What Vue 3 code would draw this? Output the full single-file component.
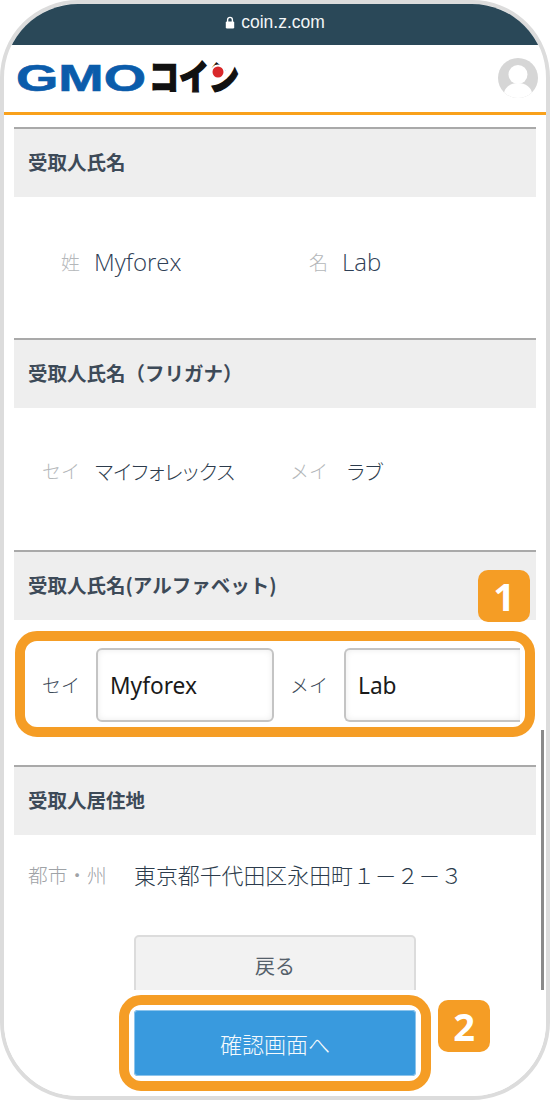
<script setup>
const nameRows = [
  { title: '受取人氏名', kind: 'plain', a: ['姓', 'Myforex'], b: ['名', 'Lab'] },
  { title: '受取人氏名（フリガナ）', kind: 'kana', a: ['セイ', 'マイフォレックス'], b: ['メイ', 'ラブ'] },
]
</script>

<template>
  <div class="phone">
    <div class="urlbar">
      <svg class="lock" width="10" height="13" viewBox="0 0 10 13">
        <path d="M2.6 6V3.8a2.4 2.4 0 0 1 4.8 0V6" fill="none" stroke="#fff" stroke-width="1.4" />
        <rect x="0.8" y="5.4" width="8.4" height="7" rx="1.2" fill="#fff" />
      </svg>
      <span>coin.z.com</span>
    </div>

    <header class="head">
      <svg class="logo" width="250" height="44" viewBox="0 0 250 44">
        <text class="logo-gmo" x="0" y="35" textLength="130" lengthAdjust="spacingAndGlyphs">GMO</text>
        <text class="logo-coin" transform="translate(133 34) scale(1 1.17)">コイン</text>
        <circle cx="202" cy="16" r="6.5" fill="#d9282a" stroke="#fff" stroke-width="2" />
      </svg>
      <svg class="avatar" width="40" height="40" viewBox="0 0 40 40">
        <defs>
          <clipPath id="avatar-clip"><circle cx="20" cy="20" r="20" /></clipPath>
        </defs>
        <circle cx="20" cy="20" r="20" fill="#d6d6d6" />
        <g clip-path="url(#avatar-clip)" fill="#fff">
          <circle cx="20" cy="16.5" r="9.5" />
          <ellipse cx="20" cy="36" rx="14" ry="11" />
        </g>
      </svg>
    </header>

    <main class="main">
      <section v-for="r in nameRows" :key="r.title" class="section">
        <h2 class="title">{{ r.title }}</h2>
        <div class="row" :class="r.kind">
          <div class="field">
            <span class="label">{{ r.a[0] }}</span><span class="value">{{ r.a[1] }}</span>
          </div>
          <div class="field">
            <span class="label">{{ r.b[0] }}</span><span class="value">{{ r.b[1] }}</span>
          </div>
        </div>
      </section>

      <section class="section">
        <h2 class="title">受取人氏名(アルファベット)</h2>
        <div class="row inputs">
          <div class="field">
            <span class="label">セイ</span><input class="box" value="Myforex" readonly />
          </div>
          <div class="field">
            <span class="label">メイ</span><input class="box" value="Lab" readonly />
          </div>
        </div>
      </section>

      <section class="section">
        <h2 class="title">受取人居住地</h2>
        <div class="address">
          <span class="addr-label">都市・州</span><span class="value">東京都千代田区永田町１－２－３</span>
        </div>
      </section>

      <button class="btn back" type="button">戻る</button>
      <div class="scrollbar"></div>
    </main>

    <footer class="foot">
      <button class="btn next" type="button">確認画面へ</button>
    </footer>

    <div class="mark mark-1"></div>
    <div class="badge badge-1">1</div>
    <div class="mark mark-2"></div>
    <div class="badge badge-2">2</div>
  </div>
</template>

<style scoped>
.phone {
  position: relative;
  box-sizing: border-box;
  width: 550px;
  height: 1100px;
  border: 4px solid #dcdcdc;
  border-radius: 78px;
  overflow: hidden;
  background: #fff;
  display: flex;
  flex-direction: column;
  font-family: "Noto Sans CJK JP", "Noto Sans", sans-serif;
  color: #3f4b57;
}
.urlbar {
  flex: none;
  height: 41px;
  background: #2a4858;
  color: #f2f5f6;
  display: flex;
  align-items: center;
  justify-content: center;
  gap: 6px;
  font: 17.5px "Liberation Sans", sans-serif;
  padding-bottom: 4px;
  box-sizing: border-box;
}
.lock { display: block; }
.head {
  flex: none;
  box-sizing: border-box;
  height: 70px;
  border-bottom: 3px solid #f9a11b;
  display: flex;
  align-items: center;
  justify-content: space-between;
  padding: 0 8px 2px 12px;
}
.logo-gmo {
  font: 700 36px "Liberation Sans", sans-serif;
  fill: #0b5cab;
  stroke: #0b5cab;
  stroke-width: 0.6px;
}
.logo-coin {
  font: 900 30px "Noto Sans CJK JP", sans-serif;
  fill: #111;
  stroke: #111;
  stroke-width: 1.2px;
}
.main {
  flex: 1;
  min-height: 0;
  overflow: hidden;
  position: relative;
  padding: 12px 10px 0;
}
.section { margin: 0; }
.title {
  box-sizing: border-box;
  height: 70px;
  margin: 0;
  padding: 0 14px 3px;
  display: flex;
  align-items: center;
  background: #eeeeee;
  border-top: 2px solid #a9a9a9;
  font-size: 19.5px;
  font-weight: 700;
  color: #3d4a58;
}
.row {
  display: flex;
  align-items: center;
  height: 141px;
  padding-bottom: 13px;
  box-sizing: border-box;
}
.row.kana { height: 141.5px; padding-bottom: 16px; }
.row.inputs { height: 145px; padding-bottom: 15px; }
.field {
  width: 248px;
  display: flex;
  align-items: center;
  gap: 15px;
}
.plain .field { gap: 14px; }
.inputs .field { gap: 16px; }
.inputs .field + .field .box {
  width: 176px;
  border-right: 0;
  border-radius: 6px 0 0 6px;
}
.label {
  width: 66px;
  text-align: right;
  font-size: 19px;
  font-weight: 300;
  color: #b4b7ba;
  flex: none;
}
.value {
  font: 300 24px "Open Sans", "Noto Sans CJK JP", sans-serif;
  color: #2f4056;
}
.kana .value {
  font: 300 20.5px "Noto Sans CJK JP", sans-serif;
  font-feature-settings: "palt";
  color: #2c3b4c;
}
.kana .field + .field .value { margin-left: 4px; }
.inputs .label { color: #3d4a58; }
.box {
  box-sizing: border-box;
  width: 178px;
  height: 74px;
  padding: 2px 12px 0;
  border: 2px solid #c4c4c4;
  border-radius: 6px;
  background: #fff;
  box-shadow: inset 0 0 6px rgba(0, 0, 0, 0.08);
  font: 22.7px "Noto Sans", sans-serif;
  color: #1a1a1a;
  outline: none;
}
.address {
  display: flex;
  align-items: center;
  padding: 22px 14px 0;
  height: 58px;
  box-sizing: border-box;
}
.addr-label { width: 106px; flex: none; font-size: 19.7px; font-weight: 300; color: #9fa3a7; }
.address .value {
  font: 300 21.9px "Noto Sans CJK JP", sans-serif;
  color: #2c3b4c;
}
.btn {
  display: block;
  box-sizing: border-box;
  width: 282px;
  margin: 0 auto;
  font-family: inherit;
  font-size: 20px;
}
.back {
  height: 80px;
  margin-top: 42.5px;
  padding-bottom: 20px;
  background: #f2f2f2;
  border: 2px solid #dcdcdc;
  border-radius: 5px;
  color: #55606a;
}
.scrollbar {
  position: absolute;
  right: 2px;
  top: 615px;
  bottom: 0;
  width: 3px;
  background: #8a8a8a;
}
.foot {
  flex: none;
  height: 106px;
  padding-top: 20px;
  box-sizing: border-box;
  background: #fff;
}
.next {
  height: 66px;
  margin-left: 130px;
  margin-right: 0;
  background: #399ade;
  border: 0;
  border-radius: 4px;
  color: #f6fafd;
  font-size: 22px;
  font-weight: 300;
  box-shadow: 0 0 0 1px #8cc4ec inset;
}
.mark {
  position: absolute;
  box-sizing: border-box;
  border: 10px solid #f59d25;
  border-radius: 22px;
}
.mark-1 { left: 11px; top: 627px; width: 520px; height: 106px; }
.mark-2 { left: 115px; top: 991px; width: 312px; height: 96px; }
.badge {
  position: absolute;
  width: 52px;
  height: 52px;
  border-radius: 10px;
  background: #f59d25;
  color: #fff;
  display: flex;
  align-items: center;
  justify-content: center;
  font: 700 38px "Open Sans", sans-serif;
}
.badge-1 { left: 474px; top: 566px; }
.badge-2 { left: 434px; top: 996px; }
</style>
